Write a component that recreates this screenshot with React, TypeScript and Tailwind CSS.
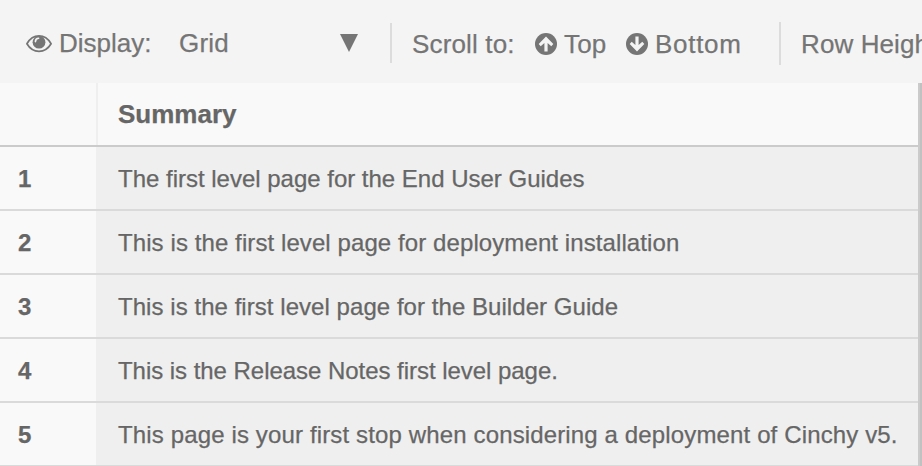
const rows = [
  { text: 'The first level page for the End User Guides', track: 'tracking-[-0.01px]' },
  { text: 'This is the first level page for deployment installation', track: 'tracking-[0.09px]' },
  { text: 'This is the first level page for the Builder Guide', track: 'tracking-[0.05px]' },
  { text: 'This is the Release Notes first level page.', track: 'tracking-[-0.04px]' },
  { text: 'This page is your first stop when considering a deployment of Cinchy v5.', track: 'tracking-[0.138px]' },
];

function EyeIcon() {
  return (
    <svg viewBox="0 0 26 26" className="size-[26px] shrink-0" fill="none">
      <path d="M0.900 13.700C4 8.400 8 5.900 13 5.900S22 8.400 25.100 13.700C22 18.900 18 21.300 13 21.300S4 18.900 0.900 13.700Z" stroke="currentColor" strokeWidth="1.700" strokeLinejoin="round" />
      <circle cx="13" cy="12.200" r="6.400" fill="currentColor" />
      <path d="M9.400 11.600C9.500 9.700 10.800 8.400 12.600 8.300" stroke="#f4f4f4" strokeWidth="1.600" strokeLinecap="round" />
    </svg>
  );
}

function ArrowCircle({ down = false }: { down?: boolean }) {
  return (
    <svg viewBox="0 0 22 22" className={down ? 'size-[22px] shrink-0 rotate-180' : 'size-[22px] shrink-0'}>
      <circle cx="11" cy="11" r="11" fill="currentColor" />
      <path d="M11 3.600L18.300 10.900L16.300 13.200L12.600 10V18.500H9.400V10L5.700 13.200L3.700 10.900Z" fill="#f4f4f4" />
    </svg>
  );
}

export default function App() {
  return (
    <div className="flex h-[466px] w-[922px] flex-col overflow-hidden bg-[#f4f4f4] font-['Liberation_Sans',Arial,sans-serif] text-[#666] [-webkit-text-stroke:0.25px_currentColor]">
      <header className="flex h-[83px] shrink-0 items-start whitespace-nowrap pl-[26px] text-[26px] leading-[30px] text-[#757575]">
        <div className="mt-[28px] flex w-[364px] shrink-0 items-center">
          <EyeIcon />
          <span className="ml-[7px] w-[120px]">Display:</span>
          <span className="w-[161px] tracking-[0.2px]">Grid</span>
          <svg viewBox="0 0 18 18" className="size-[18px]" fill="currentColor">
            <path d="M0 0h18L9 18z" />
          </svg>
        </div>
        <div className="mt-[23px] h-10 w-[2px] shrink-0 bg-[#dcdcdc]" />
        <div className="mt-[29px] flex w-[387px] shrink-0 items-center pl-5">
          <span className="w-[123px] tracking-[0.15px]">Scroll to:</span>
          <ArrowCircle />
          <span className="ml-[7px] w-[62px] tracking-[0.2px]">Top</span>
          <ArrowCircle down />
          <span className="ml-[7px] tracking-[0.7px]">Bottom</span>
        </div>
        <div className="mt-[22px] h-[43px] w-[2px] shrink-0 bg-[#dcdcdc]" />
        <span className="ml-[20px] mt-[29px] tracking-[0.1px]">Row Height</span>
      </header>
      <main className="flex h-[383px]">
        <div className="w-[918px] shrink-0">
          <div className="flex h-16 border-b-2 border-[#cbcbcb] bg-[#f9f9f9]">
            <div className="w-[98px] border-r-2 border-[#efefef]" />
            <div className="pl-5 pt-4 text-[26px] font-bold leading-[30px]">Summary</div>
          </div>
          {rows.map((row, i) => (
            <div key={row.text} className="flex h-16 border-b-2 border-[#dadada] bg-[#efefef] text-2xl leading-[28px]">
              <div className="w-24 bg-[#f9f9f9] pl-[18px] pt-[18px] font-bold">{i + 1}</div>
              <div className="whitespace-nowrap pl-[22px] pt-[18px]">
                <span className={row.track}>{row.text}</span>
              </div>
            </div>
          ))}
        </div>
        <div className="flex-1 border-l-2 border-[#cbcbcb] bg-[#c1c1c1]" />
      </main>
    </div>
  );
}
